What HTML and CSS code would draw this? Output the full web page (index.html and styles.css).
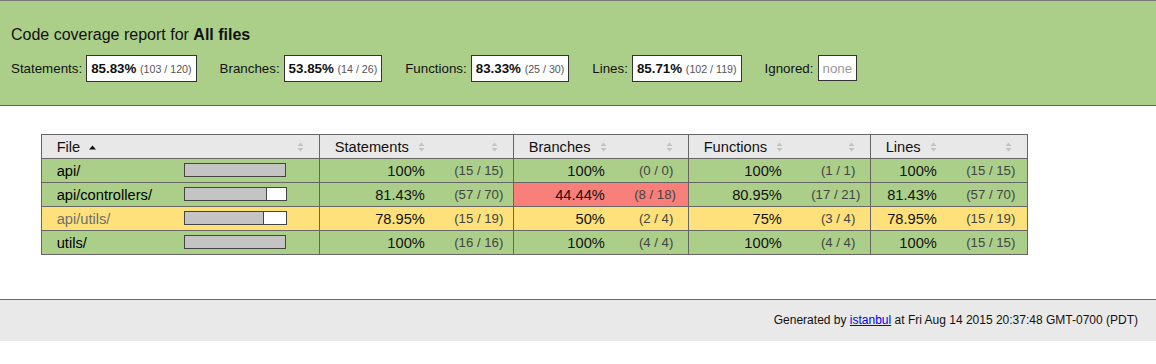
FILE: index.html
```html
<!doctype html>
<html>
<head>
<meta charset="utf-8">
<title>Code coverage report for All files</title>
<link rel="stylesheet" href="styles.css">
</head>
<body>
<div class="header high">
  <h1>Code coverage report for <span class="entity">All files</span></h1>
  <div class="metrics">
    <div class="m">Statements: <span class="metric">85.83% <small>(103 / 120)</small></span></div>
    <div class="m">Branches: <span class="metric">53.85% <small>(14 / 26)</small></span></div>
    <div class="m">Functions: <span class="metric">83.33% <small>(25 / 30)</small></span></div>
    <div class="m">Lines: <span class="metric">85.71% <small>(102 / 119)</small></span></div>
    <div class="m">Ignored: <span class="metric"><span class="ignore-none">none</span></span></div>
  </div>
</div>
<div class="body">
  <table class="coverage-summary">
    <colgroup>
      <col class="c-file"><col class="c-pic">
      <col class="c-st-pct"><col class="c-st-abs">
      <col class="c-br-pct"><col class="c-br-abs">
      <col class="c-fn-pct"><col class="c-fn-abs">
      <col class="c-ln-pct"><col class="c-ln-abs">
    </colgroup>
    <thead>
      <tr>
        <th class="file">File <svg class="sorter" width="7" height="10" viewBox="0 0 7 10"><path d="M0 7.5H7L3.5 3.5Z" fill="#111"/></svg></th>
        <th class="pic"><svg class="sorter" width="7" height="10" viewBox="0 0 7 10"><path d="M0.5 4H6.5L3.5 0.5ZM0.5 6H6.5L3.5 9.5Z" fill="#c2c2c2"/></svg></th>
        <th class="pct">Statements <svg class="sorter" width="7" height="10" viewBox="0 0 7 10"><path d="M0.5 4H6.5L3.5 0.5ZM0.5 6H6.5L3.5 9.5Z" fill="#c2c2c2"/></svg></th>
        <th class="abs"><svg class="sorter" width="7" height="10" viewBox="0 0 7 10"><path d="M0.5 4H6.5L3.5 0.5ZM0.5 6H6.5L3.5 9.5Z" fill="#c2c2c2"/></svg></th>
        <th class="pct">Branches <svg class="sorter" width="7" height="10" viewBox="0 0 7 10"><path d="M0.5 4H6.5L3.5 0.5ZM0.5 6H6.5L3.5 9.5Z" fill="#c2c2c2"/></svg></th>
        <th class="abs"><svg class="sorter" width="7" height="10" viewBox="0 0 7 10"><path d="M0.5 4H6.5L3.5 0.5ZM0.5 6H6.5L3.5 9.5Z" fill="#c2c2c2"/></svg></th>
        <th class="pct">Functions <svg class="sorter" width="7" height="10" viewBox="0 0 7 10"><path d="M0.5 4H6.5L3.5 0.5ZM0.5 6H6.5L3.5 9.5Z" fill="#c2c2c2"/></svg></th>
        <th class="abs"><svg class="sorter" width="7" height="10" viewBox="0 0 7 10"><path d="M0.5 4H6.5L3.5 0.5ZM0.5 6H6.5L3.5 9.5Z" fill="#c2c2c2"/></svg></th>
        <th class="pct">Lines <svg class="sorter" width="7" height="10" viewBox="0 0 7 10"><path d="M0.5 4H6.5L3.5 0.5ZM0.5 6H6.5L3.5 9.5Z" fill="#c2c2c2"/></svg></th>
        <th class="abs"><svg class="sorter" width="7" height="10" viewBox="0 0 7 10"><path d="M0.5 4H6.5L3.5 0.5ZM0.5 6H6.5L3.5 9.5Z" fill="#c2c2c2"/></svg></th>
      </tr>
    </thead>
    <tbody>
      <tr>
        <td class="file high"><a href="#">api/</a></td>
        <td class="pic high"><div class="bar"><span class="cover-fill cover-full" style="width:100px"></span></div></td>
        <td class="pct high">100%</td><td class="abs high">(15 / 15)</td>
        <td class="pct high">100%</td><td class="abs high">(0 / 0)</td>
        <td class="pct high">100%</td><td class="abs high">(1 / 1)</td>
        <td class="pct high">100%</td><td class="abs high">(15 / 15)</td>
      </tr>
      <tr>
        <td class="file high"><a href="#">api/controllers/</a></td>
        <td class="pic high"><div class="bar"><span class="cover-fill" style="width:81px"></span><span class="cover-empty" style="width:19px"></span></div></td>
        <td class="pct high">81.43%</td><td class="abs high">(57 / 70)</td>
        <td class="pct low">44.44%</td><td class="abs low">(8 / 18)</td>
        <td class="pct high">80.95%</td><td class="abs high">(17 / 21)</td>
        <td class="pct high">81.43%</td><td class="abs high">(57 / 70)</td>
      </tr>
      <tr>
        <td class="file medium"><a class="visited" href="#">api/utils/</a></td>
        <td class="pic medium"><div class="bar"><span class="cover-fill" style="width:78px"></span><span class="cover-empty" style="width:22px"></span></div></td>
        <td class="pct medium">78.95%</td><td class="abs medium">(15 / 19)</td>
        <td class="pct medium">50%</td><td class="abs medium">(2 / 4)</td>
        <td class="pct medium">75%</td><td class="abs medium">(3 / 4)</td>
        <td class="pct medium">78.95%</td><td class="abs medium">(15 / 19)</td>
      </tr>
      <tr>
        <td class="file high"><a href="#">utils/</a></td>
        <td class="pic high"><div class="bar"><span class="cover-fill cover-full" style="width:100px"></span></div></td>
        <td class="pct high">100%</td><td class="abs high">(16 / 16)</td>
        <td class="pct high">100%</td><td class="abs high">(4 / 4)</td>
        <td class="pct high">100%</td><td class="abs high">(4 / 4)</td>
        <td class="pct high">100%</td><td class="abs high">(15 / 15)</td>
      </tr>
    </tbody>
  </table>
</div>
<div class="footer">
  <div class="meta">Generated by <a href="#">istanbul</a> at Fri Aug 14 2015 20:37:48 GMT-0700 (PDT)</div>
</div>
</body>
</html>
```

FILE: styles.css
```css
html, body {
  margin: 0;
  padding: 0;
}
body {
  font-family: "Liberation Sans", Arial, Helvetica, sans-serif;
  font-size: 13.33px;
  color: #111;
  background: #fff;
}

.header {
  border-top: 1px solid #777;
  border-bottom: 1px solid #666;
  padding: 24px 11px 23px;
}
.high { background: #abcf89; }
.medium { background: #fee17a; }
.low { background: #f9807a; }

.header h1 {
  margin: 0;
  font-size: 16px;
  line-height: 20px;
  font-weight: normal;
}
.entity { font-weight: bold; }

.metrics {
  margin-top: 10px;
  display: flex;
  align-items: baseline;
  gap: 23px;
  font-size: 13.33px;
}
.metrics .m {
  display: flex;
  align-items: baseline;
  gap: 4px;
}
.metric {
  display: inline-block;
  border: 1px solid #333;
  background: #fff;
  padding: 5px 4px 4px;
  line-height: 15px;
  font-weight: bold;
}
.metric small {
  font-size: 80%;
  font-weight: normal;
  color: #555;
}
.ignore-none {
  color: #999;
  font-weight: normal;
}

.body {
  padding: 28px 0 44px 41px;
}

.coverage-summary {
  border-collapse: collapse;
  table-layout: fixed;
  width: 986px;
  font-size: 14.67px;
}
.c-file { width: 128px; }
.c-pic { width: 150px; }
.c-st-pct { width: 120px; }
.c-st-abs { width: 74px; }
.c-br-pct { width: 106px; }
.c-br-abs { width: 69px; }
.c-fn-pct { width: 108px; }
.c-fn-abs { width: 74px; }
.c-ln-pct { width: 81px; }
.c-ln-abs { width: 76px; }

.coverage-summary th,
.coverage-summary td {
  margin: 0;
  padding: 3.5px 14.67px;
  line-height: 16px;
  border-top: 1px solid #666;
  border-bottom: 1px solid #666;
  vertical-align: top;
  white-space: nowrap;
}
.coverage-summary th {
  text-align: left;
  border: 1px solid #666;
  background: #e8e8e8;
  font-weight: normal;
  color: #111;
}
.coverage-summary th.file { border-right: none; }
.coverage-summary th.pic { border-left: none; text-align: right; }
.coverage-summary th.pct { border-right: none; }
.coverage-summary th.abs { border-left: none; text-align: right; }

.coverage-summary td.file { border-left: 1px solid #666; }
.coverage-summary td.pct { text-align: right; border-left: 1px solid #666; }
.coverage-summary td.abs {
  text-align: right;
  font-size: 90%;
  color: #444;
  border-right: 1px solid #666;
}
.coverage-summary a {
  text-decoration: none;
  color: #000;
}
.coverage-summary a.visited { color: #6e6e6e; }

.sorter {
  display: inline-block;
  vertical-align: baseline;
  margin-left: 5px;
}

.bar {
  display: flex;
  padding-top: 0;
}
.cover-fill,
.cover-empty {
  display: block;
  height: 12px;
  border: 1px solid #444;
  background: #fff;
}
.cover-fill {
  background: #c4c4c4;
}
.cover-empty {
  border-left: none;
}

.footer {
  border-top: 1px solid #666;
  background: #e9e9e9;
  padding: 13px 18px 13px;
}
.meta {
  text-align: right;
  font-size: 12px;
  line-height: 15px;
  color: #111;
}
.meta a { color: #00e; text-decoration: underline; }
```
